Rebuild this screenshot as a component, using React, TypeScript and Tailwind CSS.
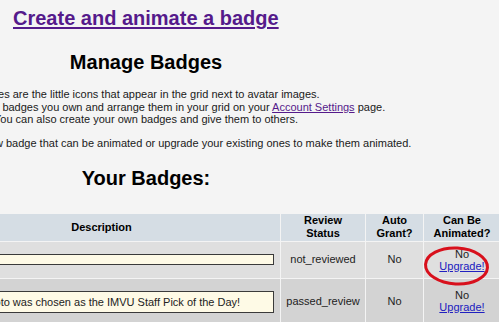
import React from "react";

export default function App() {
  return (
    <div
      className="relative w-[499px] h-[322px] overflow-hidden bg-[#f4f4f4] text-black"
      style={{ fontFamily: '"Liberation Sans", Arial, sans-serif' }}
    >
      <div className="pt-[7px] pl-[13px]">
        <a href="#" className="text-[20px] font-bold leading-[23px] text-[#551a8b] underline decoration-[2px] underline-offset-[2px]">
          Create and animate a badge
        </a>
      </div>

      <div className="ml-[-154px] w-[600px] text-center">
        <h2 className="mt-[19px] text-[20px] font-bold leading-[23px]">Manage Badges</h2>
        <p className="mt-[14px] text-[11px] leading-[12.65px] text-[#1a1a1a] whitespace-nowrap">
          Badges are the little icons that appear in the grid next to avatar images.
          <br />
          You can see all the badges you own and arrange them in your grid on your{" "}
          <a href="#" className="text-[#551a8b] underline">Account Settings</a> page.
          <br />
          You can also create your own badges and give them to others.
        </p>
        <p className="mt-[11px] text-[11px] leading-[12.65px] text-[#1a1a1a] whitespace-nowrap">
          Or, you can create a new badge that can be animated or upgrade your existing ones to make them animated.
        </p>
        <h2 className="mt-[17px] text-[20px] font-bold leading-[23px]">Your Badges:</h2>
      </div>

      <table className="mt-[23px] ml-[-78px] table-fixed border-separate [border-spacing:1px] text-[11px] leading-[12.65px] w-[579px]">
        <colgroup>
          <col className="w-[357px]" />
          <col className="w-[84px]" />
          <col className="w-[57px]" />
          <col className="w-[76px]" />
        </colgroup>
        <thead>
          <tr className="h-[27px] bg-[#d5dde4] font-bold">
            <th className="p-0 align-middle font-bold">Description</th>
            <th className="p-0 align-middle font-bold">Review<br />Status</th>
            <th className="p-0 align-middle font-bold">Auto<br />Grant?</th>
            <th className="p-0 align-middle font-bold">Can Be<br />Animated?</th>
          </tr>
        </thead>
        <tbody className="text-center text-[#222]">
          <tr className="h-[36px] bg-[#dfdfdf]">
            <td className="p-0 align-middle">
              <div className="mx-[6px] h-[11px] border border-[#3a3a3a] bg-[#fefae6]" />
            </td>
            <td className="p-0 align-middle">not_reviewed</td>
            <td className="p-0 align-middle">No</td>
            <td className="p-0 align-middle leading-[12px]">
              No
              <br />
              <a href="#" className="text-[#2020c0] underline">Upgrade!</a>
            </td>
          </tr>
          <tr className="h-[46px] bg-[#d3d3d3]">
            <td className="p-0 align-middle">
              <div className="mx-[6px] h-[22px] border border-[#3a3a3a] bg-[#fefae6] text-left pl-[27px] leading-[20px] whitespace-nowrap">
                Your photo was chosen as the IMVU Staff Pick of the Day!
              </div>
            </td>
            <td className="p-0 align-middle">passed_review</td>
            <td className="p-0 align-middle">No</td>
            <td className="p-0 align-middle leading-[11.5px]">
              No
              <br />
              <a href="#" className="text-[#2020c0] underline">Upgrade!</a>
            </td>
          </tr>
        </tbody>
      </table>

      <svg className="absolute left-[420px] top-[243px]" width="76" height="46" viewBox="0 0 76 46">
        <ellipse cx="36.5" cy="23" rx="31" ry="18" fill="none" stroke="#d8101c" strokeWidth="3" transform="rotate(3 36.5 23)" />
      </svg>
    </div>
  );
}
